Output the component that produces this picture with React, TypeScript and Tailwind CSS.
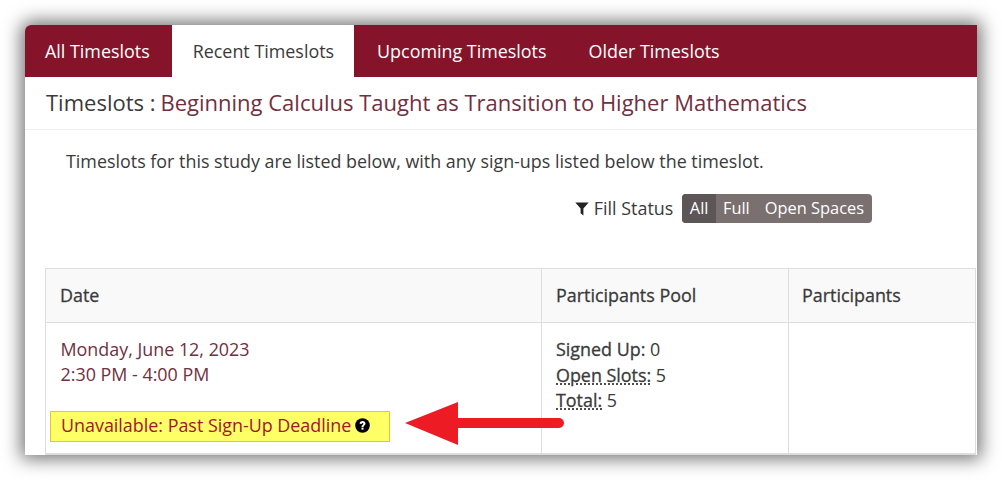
const tabs = [
  { label: 'All Timeslots', cls: 'pl-[20px] pr-[22px] text-white' },
  { label: 'Recent Timeslots', cls: 'pl-[21px] pr-[20px] bg-white text-[#3a3a3a]' },
  { label: 'Upcoming Timeslots', cls: 'pl-[23px] pr-[21px] text-white' },
  { label: 'Older Timeslots', cls: 'pl-[21px] pr-[21px] text-white' },
];

function FilterIcon() {
  return (
    <svg viewBox="0 0 14 14" className="w-[14px] h-[14px] mr-[5px] fill-[#222]">
      <path d="M0.3 0.5 H13.7 L8.4 6.6 V13.6 L5.6 11.2 V6.6 Z" />
    </svg>
  );
}

function HelpIcon() {
  return (
    <svg viewBox="0 0 16 16" className="w-[15px] h-[15px] ml-[4px]">
      <circle cx="8" cy="8" r="7.8" fill="#000" />
      <path d="M4.9 6.1 C4.9 4.3 6.4 3.3 8.1 3.3 C9.9 3.3 11.2 4.4 11.2 5.9 C11.2 7.8 9.1 7.9 9.1 9.5 H6.9 C6.9 7.1 8.9 7.2 8.9 6 C8.9 5.6 8.5 5.3 8 5.3 C7.4 5.3 7.1 5.7 7.1 6.4 Z" fill="#fff" />
      <rect x="6.9" y="10.2" width="2.2" height="2.2" fill="#fff" />
    </svg>
  );
}

export default function App() {
  return (
    <div className="w-[1002px] h-[480px] bg-white pt-[25px] pl-[25px] overflow-hidden font-['Open_Sans',sans-serif] text-[17.9px] text-[#3a3a3a]">
      <div className="relative w-[952px] h-[430px] bg-white shadow-[0_0_18px_4px_rgba(0,0,0,0.55)] rounded-tl-[6px]">
        {/* Tabs */}
        <div className="flex h-[52px] bg-[#85142b] rounded-tl-[6px]">
          {tabs.map((t) => (
            <div key={t.label} className={`flex items-center ${t.cls}`}>
              {t.label}
            </div>
          ))}
        </div>

        {/* Title */}
        <div className="h-[53px] flex items-center pl-[21px] pb-[2px] border-b border-[#eee] text-[22px]">
          <span className="mr-[5px]">Timeslots :</span>
          <span className="text-[#70303f]">Beginning Calculus Taught as Transition to Higher Mathematics</span>
        </div>

        {/* Intro */}
        <p className="pl-[41px] pt-[19px] leading-[24px]">
          Timeslots for this study are listed below, with any sign-ups listed below the timeslot.
        </p>

        {/* Fill status filter */}
        <div className="flex justify-end items-center h-[29px] mt-[21px] pr-[105px]">
          <FilterIcon />
          <span className="mr-[9px]">Fill Status</span>
          <div className="flex h-[29px] rounded-[4px] overflow-hidden bg-[#7a7070] text-white text-[16.4px]">
            <span className="flex items-center px-[7.5px] bg-[#5c5656]">All</span>
            <span className="flex items-center pl-[7px] pr-[7px]">Full</span>
            <span className="flex items-center pl-[8px] pr-[8px]">Open Spaces</span>
          </div>
        </div>

        {/* Table */}
        <div className="ml-[20px] mt-[45px] w-[931px] grid grid-cols-[496px_247px_1fr] border-t border-l border-r border-[#ddd]">
          <div className="h-[54px] bg-[#f9f9f9] border-b border-r border-[#ddd] flex items-center pl-[14px] [-webkit-text-stroke:0.3px]">Date</div>
          <div className="h-[54px] bg-[#f9f9f9] border-b border-r border-[#ddd] flex items-center pl-[14px] [-webkit-text-stroke:0.3px]">Participants Pool</div>
          <div className="h-[54px] bg-[#f9f9f9] border-b border-[#ddd] flex items-center pl-[13px] [-webkit-text-stroke:0.3px]">Participants</div>

          <div className="h-[132px] border-b-2 border-r border-[#ddd] pl-[14.5px] pt-[14px] leading-[25px] text-[#70303f]">
            <div>Monday, June 12, 2023</div>
            <div>2:30 PM - 4:00 PM</div>
            <div className="flex items-center w-[340px] h-[31px] -ml-[10.5px] mt-[24px] pl-[10px] pb-[2px] bg-[#ffff66] border border-[#e8c72c] text-[#a3152a]">
              Unavailable: Past Sign-Up Deadline
              <HelpIcon />
            </div>
          </div>
          <div className="h-[132px] border-b-2 border-r border-[#ddd] pl-[14px] pt-[14px] leading-[25.5px]">
            <div><span className="[-webkit-text-stroke:0.3px]">Signed Up:</span> 0</div>
            <div><span className="[-webkit-text-stroke:0.3px] underline decoration-dotted underline-offset-2">Open Slots:</span> 5</div>
            <div><span className="[-webkit-text-stroke:0.3px] underline decoration-dotted underline-offset-2">Total:</span> 5</div>
          </div>
          <div className="h-[132px] border-b-2 border-[#ddd]" />
        </div>

        {/* Red arrow annotation */}
        <svg viewBox="0 0 164 44" className="absolute left-[380px] top-[377px] w-[164px] h-[44px]">
          <path d="M0 21 L53 0 V16 H154 A5 5 0 0 1 154 26 H53 V43 Z" fill="#ed1c24" />
        </svg>
      </div>
    </div>
  );
}
